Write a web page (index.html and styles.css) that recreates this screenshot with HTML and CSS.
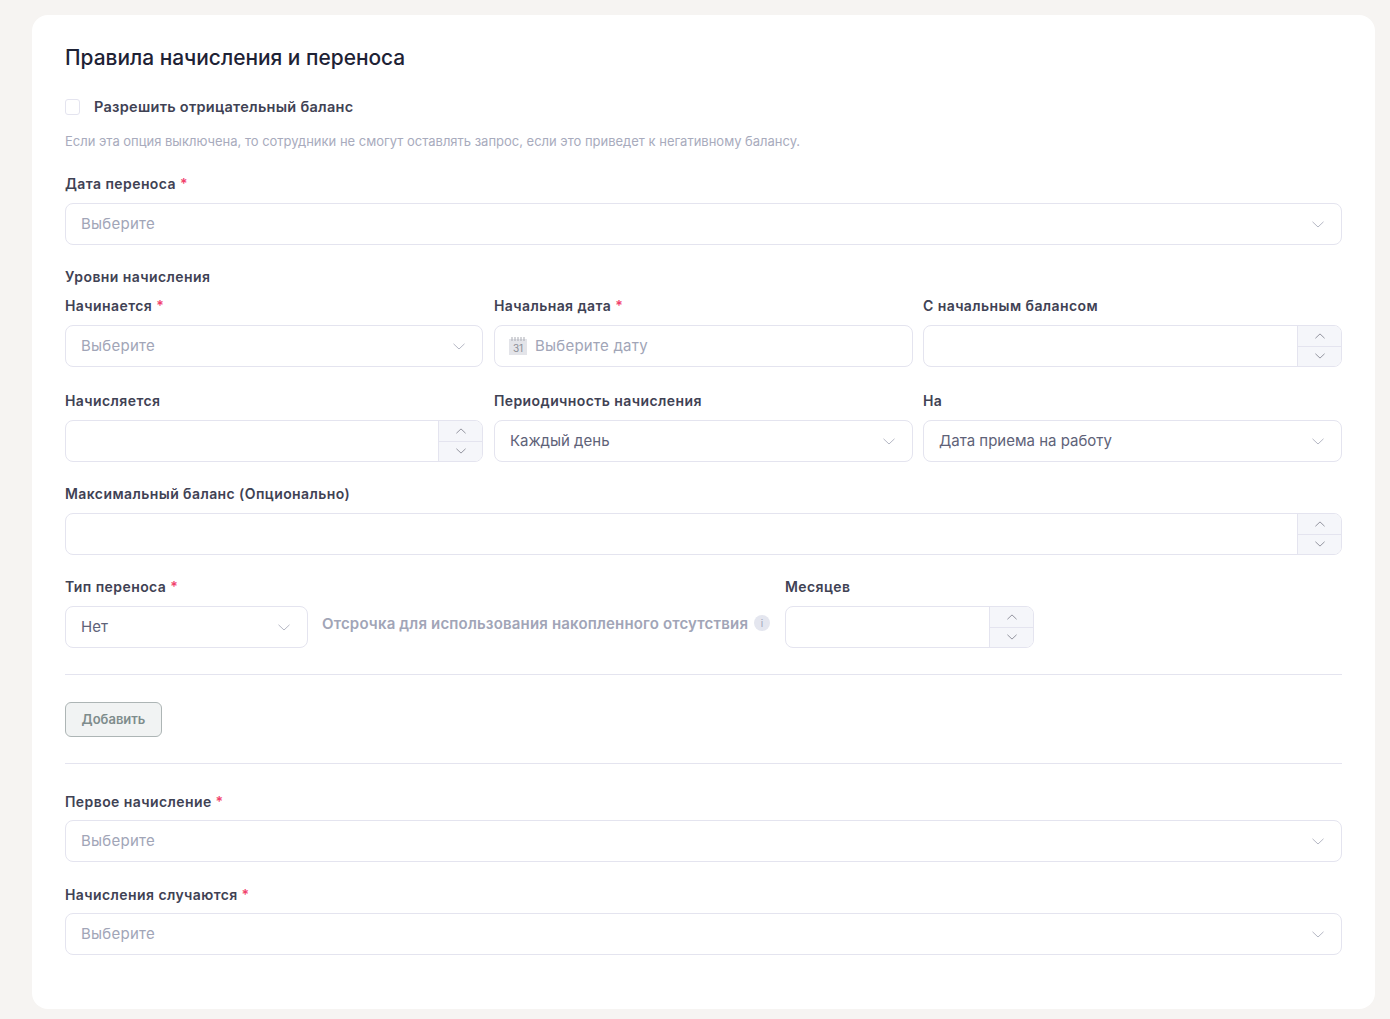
FILE: index.html
```html
<!DOCTYPE html>
<html lang="ru">
<head>
<meta charset="utf-8">
<title>Правила начисления и переноса</title>
<link rel="stylesheet" href="styles.css">
</head>
<body>
<svg class="defs" width="0" height="0" aria-hidden="true">
  <symbol id="down" viewBox="0 0 12 7"><path d="M.5.8 6 6 11.5.8" fill="none" stroke="currentColor" stroke-width="1"/></symbol>
  <symbol id="up" viewBox="0 0 12 7"><path d="M.5 6.2 6 1l5.500 5.200" fill="none" stroke="currentColor" stroke-width="1"/></symbol>
</svg>
<main class="card">
  <h1 class="title">Правила начисления и переноса</h1>
  <div class="check-row"><span class="checkbox"></span><span class="check-label">Разрешить отрицательный баланс</span></div>
  <p class="hint">Если эта опция выключена, то сотрудники не смогут оставлять запрос, если это приведет к негативному балансу.</p>

  <div class="field">
    <div class="label">Дата переноса <span class="req">*</span></div>
    <div class="control select"><span class="ph">Выберите</span><svg class="chev"><use href="#down"/></svg></div>
  </div>

  <div class="label section">Уровни начисления</div>
  <div class="grid first">
    <div>
      <div class="label">Начинается <span class="req">*</span></div>
      <div class="control select"><span class="ph">Выберите</span><svg class="chev"><use href="#down"/></svg></div>
    </div>
    <div>
      <div class="label">Начальная дата <span class="req">*</span></div>
      <div class="control date">
        <svg class="cal" viewBox="0 0 18 18"><rect y="2" width="18" height="16" fill="#e3e4e9"/><path d="M3 0v4M6 0v4M9 0v4M12 0v4M15 0v4" stroke="#a9abb3" stroke-width="1"/><text x="9" y="14.500" class="cal-num">31</text></svg>
        <span class="ph">Выберите дату</span>
      </div>
    </div>
    <div>
      <div class="label">С начальным балансом</div>
      <div class="control number"><div class="steps"><span class="step"><svg class="mini"><use href="#up"/></svg></span><span class="step"><svg class="mini"><use href="#down"/></svg></span></div></div>
    </div>
  </div>
  <div class="grid">
    <div>
      <div class="label">Начисляется</div>
      <div class="control number"><div class="steps"><span class="step"><svg class="mini"><use href="#up"/></svg></span><span class="step"><svg class="mini"><use href="#down"/></svg></span></div></div>
    </div>
    <div>
      <div class="label">Периодичность начисления</div>
      <div class="control select"><span class="val">Каждый день</span><svg class="chev"><use href="#down"/></svg></div>
    </div>
    <div>
      <div class="label">На</div>
      <div class="control select"><span class="val">Дата приема на работу</span><svg class="chev"><use href="#down"/></svg></div>
    </div>
  </div>

  <div class="field">
    <div class="label">Максимальный баланс (Опционально)</div>
    <div class="control number"><div class="steps"><span class="step"><svg class="mini"><use href="#up"/></svg></span><span class="step"><svg class="mini"><use href="#down"/></svg></span></div></div>
  </div>

  <div class="carry">
    <div class="carry-type">
      <div class="label">Тип переноса <span class="req">*</span></div>
      <div class="control select"><span class="val">Нет</span><svg class="chev"><use href="#down"/></svg></div>
    </div>
    <div class="grace"><span>Отсрочка для использования накопленного отсутствия</span><span class="info">i</span></div>
    <div class="carry-months">
      <div class="label">Месяцев</div>
      <div class="control number"><div class="steps"><span class="step"><svg class="mini"><use href="#up"/></svg></span><span class="step"><svg class="mini"><use href="#down"/></svg></span></div></div>
    </div>
  </div>

  <hr class="rule rule-a">
  <button class="add" type="button">Добавить</button>
  <hr class="rule rule-b">

  <div class="field tight">
    <div class="label">Первое начисление <span class="req">*</span></div>
    <div class="control select"><span class="ph">Выберите</span><svg class="chev"><use href="#down"/></svg></div>
  </div>
  <div class="field tight next">
    <div class="label">Начисления случаются <span class="req">*</span></div>
    <div class="control select"><span class="ph">Выберите</span><svg class="chev"><use href="#down"/></svg></div>
  </div>
</main>
</body>
</html>
```
FILE: styles.css
```css
* { box-sizing: border-box; }
html, body { margin: 0; }
body {
  background: #f6f4f2;
  padding: 15px 15px 10px 32px;
  font-family: Inter, "Noto Sans", sans-serif;
  color: #3f4254;
  height: 1019px;
  overflow: hidden;
}
.defs { position: absolute; }
.card {
  background: #fff;
  border-radius: 16px;
  height: 994px;
  padding: 30px 33px 0;
}
.title {
  margin: 0;
  font-size: 20.9px;
  line-height: 25px;
  font-weight: 500;
  color: #1e2235;
}
.check-row {
  display: flex;
  align-items: center;
  margin-top: 29px;
  height: 16px;
}
.checkbox {
  width: 15px;
  height: 16px;
  border: 1px solid #e4e4ef;
  border-radius: 3px;
  margin-right: 14px;
}
.check-label {
  font-size: 14.5px;
  line-height: 14px;
  font-weight: 600;
  letter-spacing: .27px;
  color: #3f4254;
}
.hint {
  margin: 18px 0 0;
  font-size: 13px;
  line-height: 16px;
  letter-spacing: -.01px;
  color: #a8abbd;
}
.label {
  font-size: 14px;
  line-height: 20px;
  font-weight: 600;
  letter-spacing: .42px;
  color: #3f4254;
  margin-bottom: 9px;
}
.req { color: #f1416c; }
.field { margin-top: 25px; }
.field + .section { margin-top: 22px; }
.grid {
  display: grid;
  grid-template-columns: 418.4px 1fr 419px;
  column-gap: 10.5px;
  margin-top: 24px;
}
.grid.first { margin-top: 0; }
.grid + .field { margin-top: 22px; }
.control {
  height: 42px;
  border: 1px solid #e4e4ef;
  border-radius: 8px;
  background: #fff;
  font-size: 15px;
  display: flex;
  align-items: center;
  padding-left: 15px;
  overflow: hidden;
}
.select { justify-content: space-between; padding-right: 17px; }
.ph { color: #a1a5b7; letter-spacing: .25px; margin-top: -2px; }
.val { color: #5e6278; margin-top: -2px; }
.chev { width: 12px; height: 7px; color: #b5b7c4; flex: none; }
.date { padding-left: 14px; }
.cal { width: 18px; height: 18px; margin-right: 8px; flex: none; }
.cal-num { font-size: 10px; fill: #8a8d96; text-anchor: middle; font-family: Inter, sans-serif; }
.number { justify-content: flex-end; padding: 0; }
.steps {
  width: 44px;
  height: 100%;
  border-left: 1px solid #e4e4ef;
  background: #f5f6fa;
  display: flex;
  flex-direction: column;
}
.step {
  flex: 1;
  display: flex;
  align-items: center;
  justify-content: center;
}
.step + .step { border-top: 1px solid #e4e4ef; }
.mini { width: 10px; height: 6px; color: #7f818d; }
.carry { display: flex; margin-top: 22px; }
.carry-type { width: 243px; flex: none; }
.grace {
  width: 463px;
  margin-left: 14px;
  flex: none;
  display: flex;
  align-items: center;
  gap: 6px;
  padding-top: 21px;
  height: 71px;
  font-size: 15px;
  font-weight: 600;
  letter-spacing: .17px;
  color: #a1a5b7;
  white-space: nowrap;
}
.info {
  width: 16px;
  height: 16px;
  border-radius: 50%;
  background: #e4e6ef;
  color: #a1a5b7;
  font-size: 10px;
  font-weight: 400;
  display: flex;
  align-items: center;
  justify-content: center;
}
.carry-months { width: 249px; flex: none; }
.rule { border: 0; border-top: 1px solid #e4e4ef; margin: 0; }
.rule-a { margin-top: 26px; }
.add {
  display: block;
  width: 97px;
  height: 35px;
  margin-top: 27px;
  padding: 0 0 2px;
  border: 1px solid #adb5b5;
  border-radius: 6px;
  background: #f1f3f3;
  color: #7e8c8c;
  font: 600 13px Inter, sans-serif;
}
.rule-b { margin-top: 26px; }
.field.tight { margin-top: 28px; }
.tight .label { margin-bottom: 8px; }
.field.tight.next { margin-top: 23px; }
```
